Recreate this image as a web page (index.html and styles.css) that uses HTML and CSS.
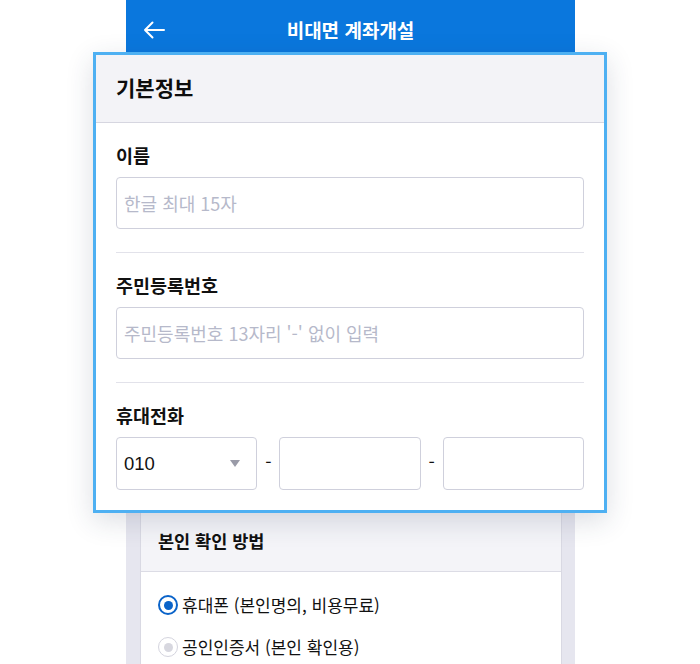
FILE: index.html
```html
<!DOCTYPE html>
<html lang="ko">
<head>
<meta charset="utf-8">
<title>비대면 계좌개설</title>
<link rel="stylesheet" href="styles.css">
</head>
<body>
<div class="stage">
  <div class="phone">
    <header class="appbar">
      <svg class="back" width="22" height="18" viewBox="0 0 22 18" aria-hidden="true">
        <path d="M21 9H2M9.5 1.5L2 9l7.5 7.5" fill="none" stroke="#fff" stroke-width="2" stroke-linecap="round" stroke-linejoin="round"/>
      </svg>
      <h1 class="appbar-title">비대면 계좌개설</h1>
    </header>
    <div class="phone-body">
      <div class="spacer-card"></div>
      <section class="card">
        <div class="card-head">본인 확인 방법</div>
        <div class="card-content">
          <label class="radio-row"><span class="radio radio-on"></span>휴대폰 (본인명의, 비용무료)</label>
          <label class="radio-row"><span class="radio radio-off"></span>공인인증서 (본인 확인용)</label>
        </div>
      </section>
    </div>
  </div>

  <section class="zoom-card">
    <div class="zoom-head">기본정보</div>
    <div class="field">
      <div class="field-label">이름</div>
      <div class="input"><span class="placeholder">한글 최대 15자</span></div>
    </div>
    <div class="field">
      <div class="field-label">주민등록번호</div>
      <div class="input"><span class="placeholder">주민등록번호 13자리 '-' 없이 입력</span></div>
    </div>
    <div class="field field-last">
      <div class="field-label">휴대전화</div>
      <div class="phone-row">
        <div class="input select"><span class="value">010</span><span class="caret"></span></div>
        <span class="dash">-</span>
        <div class="input"></div>
        <span class="dash">-</span>
        <div class="input"></div>
      </div>
    </div>
  </section>
</div>
</body>
</html>
```
FILE: styles.css
```css
* { box-sizing: border-box; }
html, body { margin: 0; padding: 0; background: #fff; }
body {
  font-family: "Noto Sans CJK KR", "Noto Sans", sans-serif;
  color: #111;
}
.stage {
  position: relative;
  width: 700px;
  height: 664px;
  overflow: hidden;
  background: #fff;
}
.phone {
  margin-left: 126px;
  width: 449px;
  height: 664px;
  display: flex;
  flex-direction: column;
  background: #e6e6ef;
}
.appbar {
  height: 60px;
  background: #0a77dd;
  display: flex;
  align-items: center;
  position: relative;
  padding: 0 0 0 17px;
  flex: none;
}
.back { display: block; }
.appbar-title {
  position: absolute;
  left: 0; right: 0;
  top: 15px;
  margin: 0;
  text-align: center;
  color: #fff;
  font-size: 19px;
  font-weight: 700;
  line-height: 30px;
}
.phone-body {
  flex: 1;
  display: flex;
  flex-direction: column;
  padding: 0 13px 0 14px;
}
.spacer-card { height: 452px; flex: none; }
.card {
  flex: 1;
  background: #fff;
  border-left: 1px solid #d9d9e3;
  border-right: 1px solid #d9d9e3;
}
.card-head {
  height: 60px;
  background: #f4f4f8;
  border-bottom: 1px solid #dcdce5;
  padding: 17px 0 0 17px;
  font-size: 17.5px;
  font-weight: 700;
  line-height: 24px;
}
.card-content {
  padding: 21px 0 0 17px;
  display: flex;
  flex-direction: column;
  gap: 18px;
}
.radio-row {
  display: flex;
  align-items: center;
  font-size: 17px;
  line-height: 24px;
  gap: 4px;
  color: #111;
}
.radio {
  width: 20px;
  height: 20px;
  border-radius: 50%;
  position: relative;
  flex: none;
}
.radio::after {
  content: "";
  position: absolute;
  left: 50%; top: 50%;
  width: 9px; height: 9px;
  margin: -4.5px 0 0 -4.5px;
  border-radius: 50%;
}
.radio-on { border: 2px solid #0a63c9; }
.radio-on::after { background: #0a63c9; }
.radio-off { border: 1.5px solid #d4d4de; }
.radio-off::after { background: #d7d7df; }

.zoom-card {
  position: absolute;
  left: 93px;
  top: 52px;
  width: 514px;
  height: 461px;
  background: #fff;
  border: 3px solid #4eb0f2;
  box-shadow: 0 8px 26px rgba(40, 50, 80, 0.16);
}
.zoom-head {
  height: 68px;
  background: #f3f3f7;
  border-bottom: 1px solid #d6d6e0;
  padding: 16px 0 0 20px;
  font-size: 21px;
  font-weight: 700;
  line-height: 32px;
  color: #0d0d0d;
}
.field {
  margin: 0 20px 0 20px;
  padding: 20px 0 23px;
  border-bottom: 1px solid #e2e2ea;
}
.field-last { border-bottom: 0; padding-bottom: 0; }
.field-label {
  font-size: 18.5px;
  font-weight: 700;
  line-height: 24px;
  margin-bottom: 10px;
  color: #111;
}
.input {
  height: 52px;
  border: 1px solid #cfd0dc;
  border-radius: 4px;
  display: flex;
  align-items: center;
  padding: 0 7px;
  background: #fff;
}
.placeholder {
  font-size: 18px;
  color: #b6b9ca;
}
.phone-row {
  display: flex;
  align-items: center;
}
.phone-row .input { flex: 1 1 0; min-width: 0; height: 53px; }
.dash {
  width: 22px;
  flex: none;
  text-align: center;
  font-size: 18px;
  line-height: 20px;
  margin-top: -6px;
}
.select { justify-content: space-between; }
.value { font-size: 18.5px; font-family: "Liberation Sans", Arial, sans-serif; color: #111; }
.caret {
  width: 0; height: 0;
  margin-right: 9px;
  border-left: 5px solid transparent;
  border-right: 5px solid transparent;
  border-top: 7px solid #9a9ba8;
}
```
